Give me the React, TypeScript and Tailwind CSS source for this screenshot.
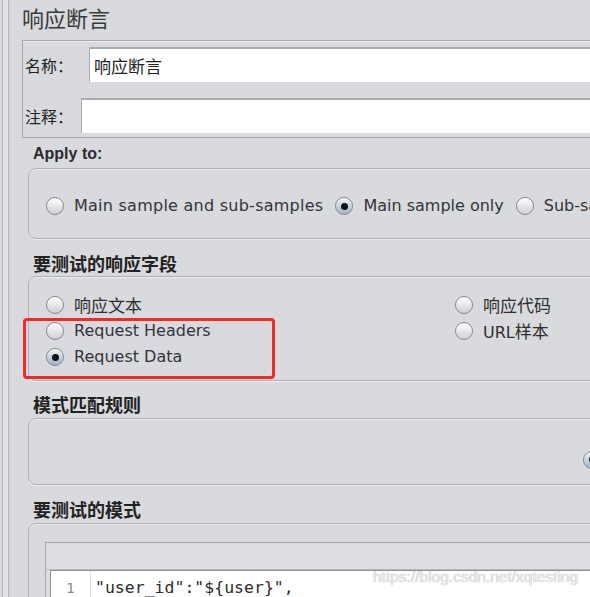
import React from "react";

const latin = "font-['DejaVu_Sans','Noto_Sans_CJK_SC',sans-serif]";
const cjk = "font-['Noto_Sans_CJK_SC',sans-serif]";

function Radio({ checked = false }: { checked?: boolean }) {
  return (
    <span
      className={
        "inline-flex w-[18px] h-[18px] shrink-0 items-center justify-center rounded-full border border-[#85868b] shadow-[inset_0_1px_1px_#fff] " +
        (checked ? "bg-linear-to-b from-[#eef2f7] to-[#9fb3cb]" : "bg-linear-to-b from-[#ffffff] to-[#cfd0d4]")
      }
    >
      {checked && <span className="w-[7px] h-[7px] rounded-full bg-[#111]" />}
    </span>
  );
}

function Option({ label, checked, cn, wide }: { label: string; checked?: boolean; cn?: boolean; wide?: boolean }) {
  return (
    <div className="flex items-center gap-[10px] h-[26px] shrink-0">
      <Radio checked={checked} />
      <span
        className={
          cn
            ? `${cjk} text-[17px] text-[#2e2e2e] whitespace-nowrap`
            : `${latin} text-[16px] text-[#33333a] whitespace-nowrap ${wide ? "tracking-[0.25px]" : ""}`
        }
      >
        {label}
      </span>
    </div>
  );
}

function Heading({ children, mt }: { children: React.ReactNode; mt: string }) {
  return <div className={`${cjk} ${mt} ml-[11px] text-[18px] leading-[22px] font-bold text-[#222]`}>{children}</div>;
}

const panel = "w-[700px] rounded-[8px] border border-[#b1b2b6] shadow-[inset_0_1px_0_#ecedf0,0_1px_0_#ecedf0]";

export default function App() {
  return (
    <div className="relative w-[590px] h-[597px] overflow-hidden bg-[#d9dade] flex items-start">
      <div className="w-[7px] h-full ml-[2px] shrink-0 border-x border-[#b5b6ba] bg-[#e2e3e7]" />
      <div className="pl-[13px]">
        <div className={`${cjk} pt-[4px] text-[22px] leading-[26px] text-[#3a3a3a]`}>响应断言</div>

        {/* name / comment */}
        <div className="mt-[10px] w-[700px] h-[98px] border border-[#a6a7ab] shadow-[inset_0_1px_0_#f0f0f2] pt-[6px] pl-[2px]">
          <div className="flex items-center">
            <span className={`${cjk} w-[64px] text-[16px] text-[#222]`}>名称：</span>
            <div className="flex-1 h-[35px] bg-white border-t-2 border-l border-[#a9aaae] flex items-center pl-[4px]">
              <span className={`${cjk} text-[17px] text-[#222]`}>响应断言</span>
            </div>
          </div>
          <div className="flex items-center mt-[16px]">
            <span className={`${cjk} w-[56px] text-[16px] text-[#222]`}>注释：</span>
            <div className="flex-1 h-[35px] bg-white border-t-2 border-l border-[#a9aaae]" />
          </div>
        </div>

        <div className="mt-[6px] ml-[11px] font-['Liberation_Sans',sans-serif] text-[16px] leading-[20px] font-bold text-[#2a2a30]">Apply to:</div>
        <div className={`${panel} mt-[4px] ml-[6px] h-[71px] pt-[24px] pl-[17px] flex gap-[12px]`}>
          <Option label="Main sample and sub-samples" wide />
          <Option label="Main sample only" checked />
          <Option label="Sub-samples only" />
        </div>

        <Heading mt="mt-[13px]">要测试的响应字段</Heading>
        <div className={`${panel} relative mt-[2px] ml-[6px] h-[105px] pt-[15px] pl-[17px] grid grid-cols-[409px_1fr] content-start`}>
          <div>
            <Option label="响应文本" cn />
            <Option label="Request Headers" />
            <Option label="Request Data" checked />
          </div>
          <div>
            <Option label="响应代码" cn />
            <div className="flex items-center gap-[10px] h-[26px]">
              <Radio />
              <span className="text-[#2e2e2e]">
                <span className={`${latin} text-[16px]`}>URL</span>
                <span className={`${cjk} text-[17px]`}>样本</span>
              </span>
            </div>
          </div>
          <div className="absolute left-[-6px] top-[41px] w-[252px] h-[61px] rounded-[4px] border-[3px] border-[#ee2a2a]" />
        </div>

        <Heading mt="mt-[12px]">模式匹配规则</Heading>
        <div className={`${panel} mt-[3px] ml-[6px] h-[67px] pt-[26px] pl-[554px]`}>
          <Radio checked />
        </div>

        <Heading mt="mt-[13px]">要测试的模式</Heading>
        <div className={`${panel} mt-[3px] ml-[6px] h-[120px] pt-[18px] pl-[16px]`}>
          <div className="w-[680px] border border-[#a4a5a9] bg-[#dcdde1]">
            <div className="h-[27px] border-b border-[#b9babe]" />
            <div className="ml-[4px] bg-white border-t border-l border-[#8f9094] flex h-[60px]">
              <div className="w-[40px] border-r border-[#e0e0e0] pt-[6px] text-center font-['DejaVu_Sans_Mono',monospace] text-[14px] leading-[22px] text-[#8a8a8a]">1</div>
              <div className="pl-[4px] pt-[6px] font-['DejaVu_Sans_Mono',monospace] text-[16.5px] leading-[22px] text-[#2c2c2c]">"user_id":"${"{"}user{"}"}",</div>
            </div>
          </div>
        </div>
      </div>

      <div className="absolute left-[373px] top-[567px] font-['Liberation_Sans',sans-serif] text-[15.5px] leading-[20px] text-[#ececec] [text-shadow:0_0_1px_#9a9a9a]">
        https://blog.csdn.net/xqtesting
      </div>
    </div>
  );
}
